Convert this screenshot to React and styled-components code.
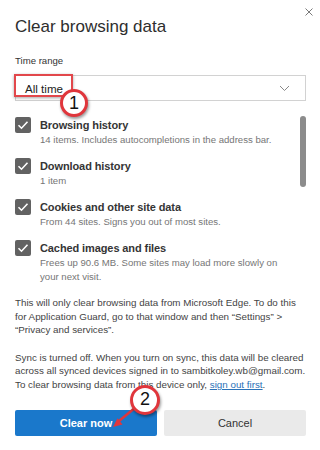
import React from "react";
import styled, { createGlobalStyle } from "styled-components";

const GlobalStyle = createGlobalStyle`
  html, body {
    margin: 0;
    background: #ffffff;
  }
  body {
    font-family: "Liberation Sans", Arial, sans-serif;
    color: #333;
  }
`;

const Dialog = styled.div`
  position: relative;
  width: 320px;
  height: 450px;
  box-sizing: border-box;
  padding: 15px 14px 0 15px;
  overflow: hidden;
`;

const Header = styled.div`
  display: flex;
  justify-content: space-between;
  align-items: flex-start;
`;

const Title = styled.h1`
  margin: 0;
  font-size: 17px;
  font-weight: 400;
  color: #2e2e2e;
  line-height: 24px;
`;

const CloseButton = styled.button`
  border: 0;
  background: none;
  padding: 0;
  margin: -7px -7px 0 0;
  width: 8px;
  height: 8px;
  display: flex;
`;

const Label = styled.div`
  margin-top: 15px;
  font-size: 9.6px;
  line-height: 14px;
  color: #333;
`;

const Select = styled.div`
  position: relative;
  margin-top: 7px;
  height: 26px;
  border: 1px solid #d2d2d2;
  box-sizing: border-box;
  display: flex;
  align-items: center;
  justify-content: space-between;
  padding: 0 15px 0 9px;
  font-size: 11.6px;
  color: #222;
`;

const Highlight = styled.div`
  position: absolute;
  left: -2px;
  top: -2px;
  width: 59px;
  height: 23px;
  border: 2px solid #e2474b;
  box-sizing: border-box;
  box-shadow: 0 1px 3px rgba(0, 0, 0, 0.35);
`;

const Step = styled.div`
  position: absolute;
  width: ${(p) => p.size}px;
  height: ${(p) => p.size}px;
  box-sizing: border-box;
  border-radius: 50%;
  background: #fff;
  border: 3px solid #e0363c;
  box-shadow: 1px 2px 3px rgba(0, 0, 0, 0.4);
  display: flex;
  align-items: center;
  justify-content: center;
  font-size: 18px;
  color: #111;
  z-index: 3;
`;

const ListArea = styled.div`
  display: flex;
  margin-top: 16px;
`;

const List = styled.div`
  flex: 1;
  display: flex;
  flex-direction: column;
  gap: 11.5px;
`;

const Scrollbar = styled.div`
  width: 6px;
  height: 71px;
  margin-top: -1px;
  border-radius: 3px;
  background: #8c8c8c;
`;

const Item = styled.div`
  display: flex;
  align-items: flex-start;
  gap: 9px;
`;

const Box = styled.div`
  width: 16px;
  height: 16px;
  border-radius: 2px;
  background: #626262;
  display: flex;
  align-items: center;
  justify-content: center;
  flex-shrink: 0;
`;

const ItemText = styled.div`
  display: flex;
  flex-direction: column;
`;

const ItemTitle = styled.div`
  font-size: 11px;
  font-weight: 700;
  letter-spacing: -0.1px;
  line-height: 16px;
  color: #353535;
`;

const ItemSub = styled.div`
  font-size: 9.6px;
  line-height: 13.5px;
  color: #767676;
  white-space: nowrap;
`;

const Paragraph = styled.p`
  margin: ${(p) => p.top}px 0 0;
  font-size: 9.8px;
  line-height: 13.6px;
  color: #444;
  white-space: nowrap;
`;

const Link = styled.a`
  color: #2a72b8;
  text-decoration: underline;
`;

const Buttons = styled.div`
  position: relative;
  display: grid;
  grid-template-columns: 142px 1fr;
  gap: 7px;
  margin-top: 18px;
`;

const Button = styled.button`
  height: 26px;
  border: 0;
  border-radius: 2px;
  font-family: "Liberation Sans", Arial, sans-serif;
  font-size: 11px;
  font-weight: ${(p) => (p.primary ? 700 : 400)};
  color: ${(p) => (p.primary ? "#fff" : "#333")};
  background: ${(p) => (p.primary ? "#1a78cb" : "#eaeaea")};
`;

const Arrow = styled.svg`
  position: absolute;
  left: 94px;
  top: -4px;
  z-index: 2;
  overflow: visible;
`;

const Check = () => (
  <svg width="12" height="10" viewBox="0 0 12 10">
    <path d="M1.5 5.2 L4.5 8.2 L10.5 1.8" fill="none" stroke="#fff" strokeWidth="1.6" />
  </svg>
);

const items = [
  { title: "Browsing history", sub: ["14 items. Includes autocompletions in the address bar."] },
  { title: "Download history", sub: ["1 item"] },
  { title: "Cookies and other site data", sub: ["From 44 sites. Signs you out of most sites."] },
  { title: "Cached images and files", sub: ["Frees up 90.6 MB. Some sites may load more slowly on", "your next visit."] },
];

export default function App() {
  return (
    <>
      <GlobalStyle />
      <Dialog>
        <Header>
          <Title>Clear browsing data</Title>
          <CloseButton aria-label="Close">
            <svg width="8" height="8" viewBox="0 0 8 8">
              <path d="M0.5 0.5 L7.5 7.5 M7.5 0.5 L0.5 7.5" stroke="#7a7a7a" strokeWidth="1" />
            </svg>
          </CloseButton>
        </Header>
        <Label>Time range</Label>
        <Select>
          <span>All time</span>
          <svg width="11" height="7" viewBox="0 0 11 7">
            <path d="M1 1 L5.5 5.5 L10 1" fill="none" stroke="#888" strokeWidth="1" />
          </svg>
          <Highlight />
          <Step size={28} style={{ left: 44, top: 13 }}>1</Step>
        </Select>
        <ListArea>
          <List>
            {items.map((it) => (
              <Item key={it.title}>
                <Box>
                  <Check />
                </Box>
                <ItemText>
                  <ItemTitle>{it.title}</ItemTitle>
                  {it.sub.map((s) => (
                    <ItemSub key={s}>{s}</ItemSub>
                  ))}
                </ItemText>
              </Item>
            ))}
          </List>
          <Scrollbar />
        </ListArea>
        <Paragraph top={13}>
          This will only clear browsing data from Microsoft Edge. To do this
          <br />
          for Application Guard, go to that window and then “Settings” &gt;
          <br />
          “Privacy and services”.
        </Paragraph>
        <Paragraph top={14}>
          Sync is turned off. When you turn on sync, this data will be cleared
          <br />
          across all synced devices signed in to sambitkoley.wb@gmail.com.
          <br />
          To clear browsing data from this device only, <Link>sign out first</Link>.
        </Paragraph>
        <Buttons>
          <Button primary>Clear now</Button>
          <Button>Cancel</Button>
          <Arrow width="30" height="26" viewBox="0 0 30 26">
            <path d="M27 1 L10 15" stroke="#e0363c" strokeWidth="2.5" fill="none" />
            <path d="M4 21 L8.5 12.2 L13.5 18.4 Z" fill="#e0363c" />
          </Arrow>
          <Step size={30} style={{ left: 115, top: -25 }}>2</Step>
        </Buttons>
      </Dialog>
    </>
  );
}
